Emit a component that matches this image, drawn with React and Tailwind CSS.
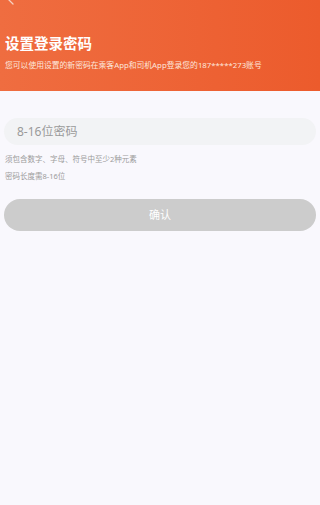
import React, { useState } from "react";

export default function App() {
  const [pwd, setPwd] = useState("");
  return (
    <div
      className="min-h-[505px] w-[320px] bg-[#f9f8fd]"
      style={{ fontFamily: '"Noto Sans", "Noto Sans CJK SC", sans-serif' }}
    >
      <div className="h-[91px] overflow-hidden bg-gradient-to-r from-[#ef6d40] to-[#ec5b2c] px-[5px]">
        <svg width="10" height="10" viewBox="0 0 10 10" className="-mt-[5px] ml-[2px] block">
          <path d="M6 1 L2 5 L6 9" fill="none" stroke="#f6d0c0" strokeWidth="1.3" strokeLinecap="round" />
        </svg>
        <h1 className="mt-[29px] text-[14.5px] font-bold leading-[18px] text-white">设置登录密码</h1>
        <p className="mt-[8px] whitespace-nowrap text-[7.8px] leading-[10px] text-[#fde7dd]">
          您可以使用设置的新密码在乘客App和司机App登录您的187*****273账号
        </p>
      </div>
      <div className="px-[4px] pt-[27px]">
        <input
          value={pwd}
          onChange={(e) => setPwd(e.target.value)}
          placeholder="8-16位密码"
          type="password"
          className="h-[27px] w-full rounded-full bg-[#f2f3f5] px-[13px] text-[12px] text-[#333] outline-none placeholder:text-[#9a9a9a]"
        />
        <p className="mt-[9px] pl-[1px] text-[7.5px] leading-[10px] text-[#9b9b9b]">须包含数字、字母、符号中至少2种元素</p>
        <p className="mt-[7px] pl-[1px] text-[7.5px] leading-[10px] text-[#9b9b9b]">密码长度需8-16位</p>
        <button className="mt-[18px] h-[32px] w-full rounded-full bg-[#cccccc] text-[11px] text-white">确认</button>
      </div>
    </div>
  );
}
